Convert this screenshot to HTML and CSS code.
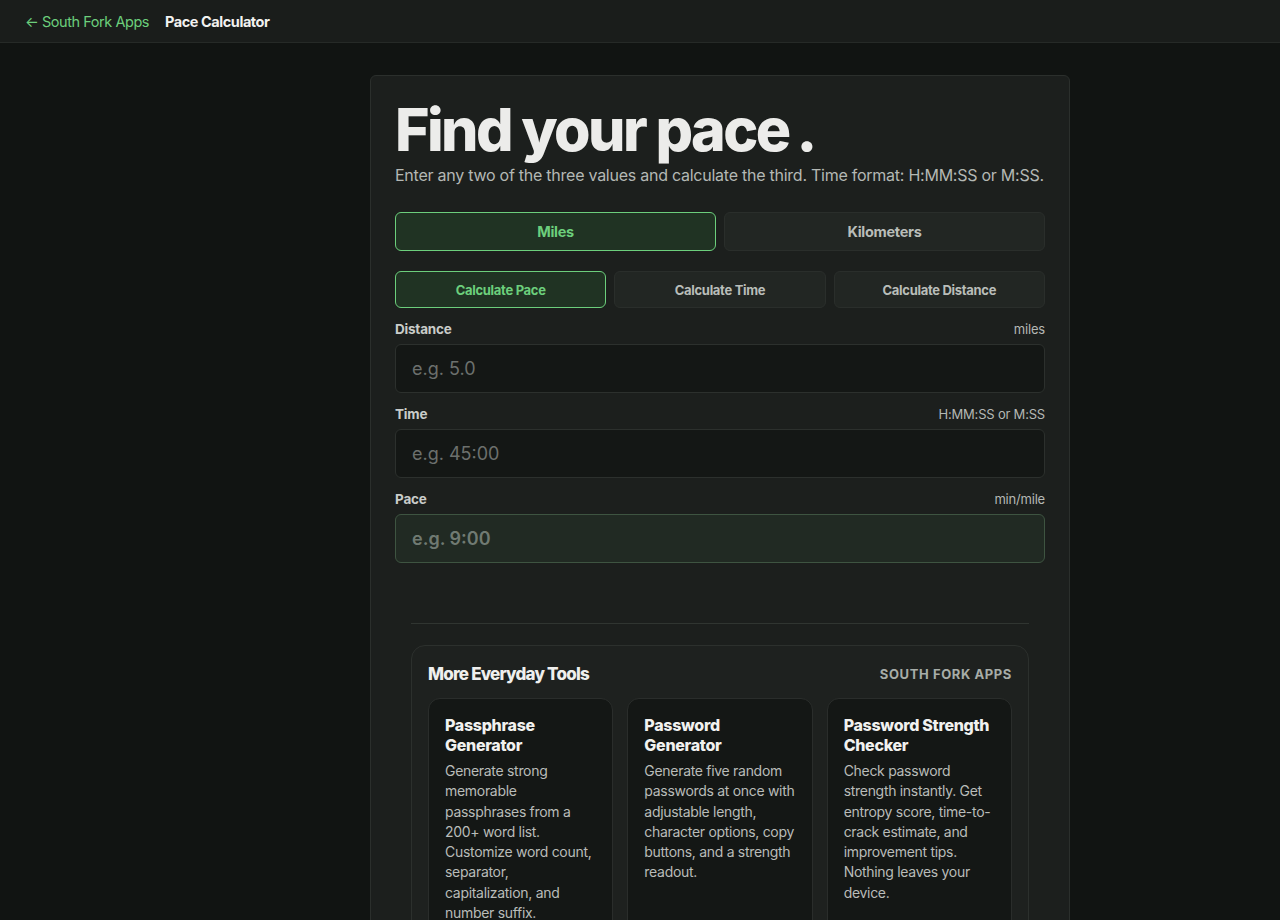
FILE: index.html
```html
<!DOCTYPE html>
<html lang="en">
<head>
  <meta charset="utf-8">
  <title>Pace Calculator</title>
  <link rel="stylesheet" href="styles.css">
</head>
<body>
  <header class="topbar">
    <a class="back" href="#">&larr; South Fork Apps</a>
    <span class="crumb">Pace Calculator</span>
  </header>
  <main class="wrap">
    <section class="card">
      <h1 class="hero">Find your pace<span class="dot">.</span></h1>
      <p class="lead">Enter any two of the three values and calculate the third. Time format: H:MM:SS or M:SS.</p>

      <div class="seg seg-units">
        <button class="seg-btn active">Miles</button>
        <button class="seg-btn">Kilometers</button>
      </div>

      <div class="seg seg-mode">
        <button class="seg-btn active">Calculate Pace</button>
        <button class="seg-btn">Calculate Time</button>
        <button class="seg-btn">Calculate Distance</button>
      </div>

      <div class="field">
        <div class="field-head"><label>Distance</label><span class="unit">miles</span></div>
        <input class="inp" type="text" placeholder="e.g. 5.0">
      </div>
      <div class="field">
        <div class="field-head"><label>Time</label><span class="unit">H:MM:SS or M:SS</span></div>
        <input class="inp" type="text" placeholder="e.g. 45:00">
      </div>
      <div class="field">
        <div class="field-head"><label>Pace</label><span class="unit">min/mile</span></div>
        <input class="inp result" type="text" placeholder="e.g. 9:00" readonly>
      </div>

      <div class="more">
        <hr>
        <div class="tools">
          <div class="tools-head">
            <h2>More Everyday Tools</h2>
            <span class="brand">South Fork Apps</span>
          </div>
          <div class="tool-grid">
            <a class="tool" href="#">
              <h3>Passphrase Generator</h3>
              <p>Generate strong memorable passphrases from a 200+ word list. Customize word count, separator, capitalization, and number suffix.</p>
            </a>
            <a class="tool" href="#">
              <h3>Password Generator</h3>
              <p>Generate five random passwords at once with adjustable length, character options, copy buttons, and a strength readout.</p>
            </a>
            <a class="tool" href="#">
              <h3>Password Strength Checker</h3>
              <p>Check password strength instantly. Get entropy score, time-to-crack estimate, and improvement tips. Nothing leaves your device.</p>
            </a>
          </div>
        </div>
      </div>
    </section>
  </main>
</body>
</html>
```

FILE: styles.css
```css
:root {
  --bg: #111412;
  --bar: #1a1d1b;
  --card: #1c1f1d;
  --line: #2b2f2c;
  --text: #ececea;
  --muted: #b4b8b4;
  --green: #6ccf7c;
  --green-bg: #203323;
  --font: Inter, "Noto Sans", sans-serif;
}

* {
  box-sizing: border-box;
}

body {
  margin: 0;
  background: var(--bg);
  color: var(--text);
  font-family: var(--font);
}

.topbar {
  height: 43px;
  display: flex;
  align-items: center;
  gap: 16px;
  padding: 0 25px;
  background: var(--bar);
  border-bottom: 1px solid #262a27;
  font-size: 14.5px;
}

.back {
  color: var(--green);
  text-decoration: none;
  letter-spacing: -0.45px;
}

.crumb {
  font-weight: 700;
  color: #f2f2f0;
  letter-spacing: -0.45px;
}

.wrap {
  display: flex;
  justify-content: center;
  padding: 32px 0 0 160px;
}

.card {
  width: 700px;
  background: var(--card);
  border: 1px solid var(--line);
  border-radius: 6px;
  padding: 20px 24px 40px;
}

.hero {
  margin: 0;
  font-size: 59px;
  font-weight: 800;
  letter-spacing: -2.6px;
  line-height: 68px;
  color: #ececea;
}

.hero .dot {
  margin-left: 8px;
}

.lead {
  margin: 0 0 26px;
  font-size: 16px;
  color: var(--muted);
  letter-spacing: -0.25px;
  line-height: 22px;
}

.seg {
  display: flex;
  gap: 8px;
}

.seg-btn {
  flex: 1;
  font-family: var(--font);
  font-weight: 700;
  color: #b9bdb9;
  background: #222623;
  border: 1px solid #2a2e2b;
  border-radius: 6px;
  cursor: pointer;
  letter-spacing: -0.3px;
}

.seg-btn.active {
  background: var(--green-bg);
  border-color: var(--green);
  color: var(--green);
}

.seg-units {
  margin-bottom: 20px;
}

.seg-units .seg-btn {
  height: 39px;
  font-size: 14.5px;
}

.seg-mode .seg-btn {
  height: 37px;
  font-size: 13px;
}

.field {
  margin-top: 13px;
}

.field-head {
  display: flex;
  justify-content: space-between;
  align-items: baseline;
  margin-bottom: 7px;
}

.field-head label {
  font-size: 13.5px;
  font-weight: 700;
  color: #c9ccc9;
  letter-spacing: -0.2px;
}

.unit {
  font-size: 13px;
  color: #b4b8b4;
  letter-spacing: -0.2px;
}

.inp {
  display: block;
  width: 100%;
  height: 49px;
  padding: 0 16px;
  font-family: var(--font);
  font-size: 18px;
  color: var(--text);
  background: #141715;
  border: 1px solid #2c302d;
  border-radius: 6px;
  outline: none;
}

.inp::placeholder {
  color: #6c706d;
}

.inp.result {
  background: #212a23;
  border-color: #3e5441;
  font-weight: 600;
}

.inp.result::placeholder {
  color: #707a72;
}

/* related tools */
.more {
  margin: 60px 16px 0;
}

.more hr {
  border: 0;
  border-top: 1px solid #303531;
  margin: 0 0 21px;
}

.tools {
  background: #1e211f;
  border: 1px solid #2c302d;
  border-radius: 14px;
  padding: 16px 16px 20px;
}

.tools-head {
  display: flex;
  justify-content: space-between;
  align-items: center;
  margin: 2px 0 14px;
}

.tools-head h2 {
  margin: 0;
  font-size: 17px;
  font-weight: 800;
  letter-spacing: -0.8px;
  color: #efefed;
}

.brand {
  font-size: 13px;
  font-weight: 700;
  text-transform: uppercase;
  letter-spacing: 0.6px;
  color: #a7ada8;
}

.tool-grid {
  display: grid;
  grid-template-columns: repeat(3, 1fr);
  gap: 14px;
}

.tool {
  display: block;
  background: #141715;
  border: 1px solid #2a2d2b;
  border-radius: 12px;
  padding: 16px 16px 20px;
  text-decoration: none;
  min-height: 240px;
}

.tool h3 {
  margin: 0 0 6px;
  font-size: 16px;
  font-weight: 800;
  line-height: 20px;
  letter-spacing: -0.3px;
  color: #f1f1ef;
}

.tool p {
  margin: 0;
  font-size: 14px;
  line-height: 20.3px;
  color: #b9bcb9;
  letter-spacing: -0.3px;
}
```
